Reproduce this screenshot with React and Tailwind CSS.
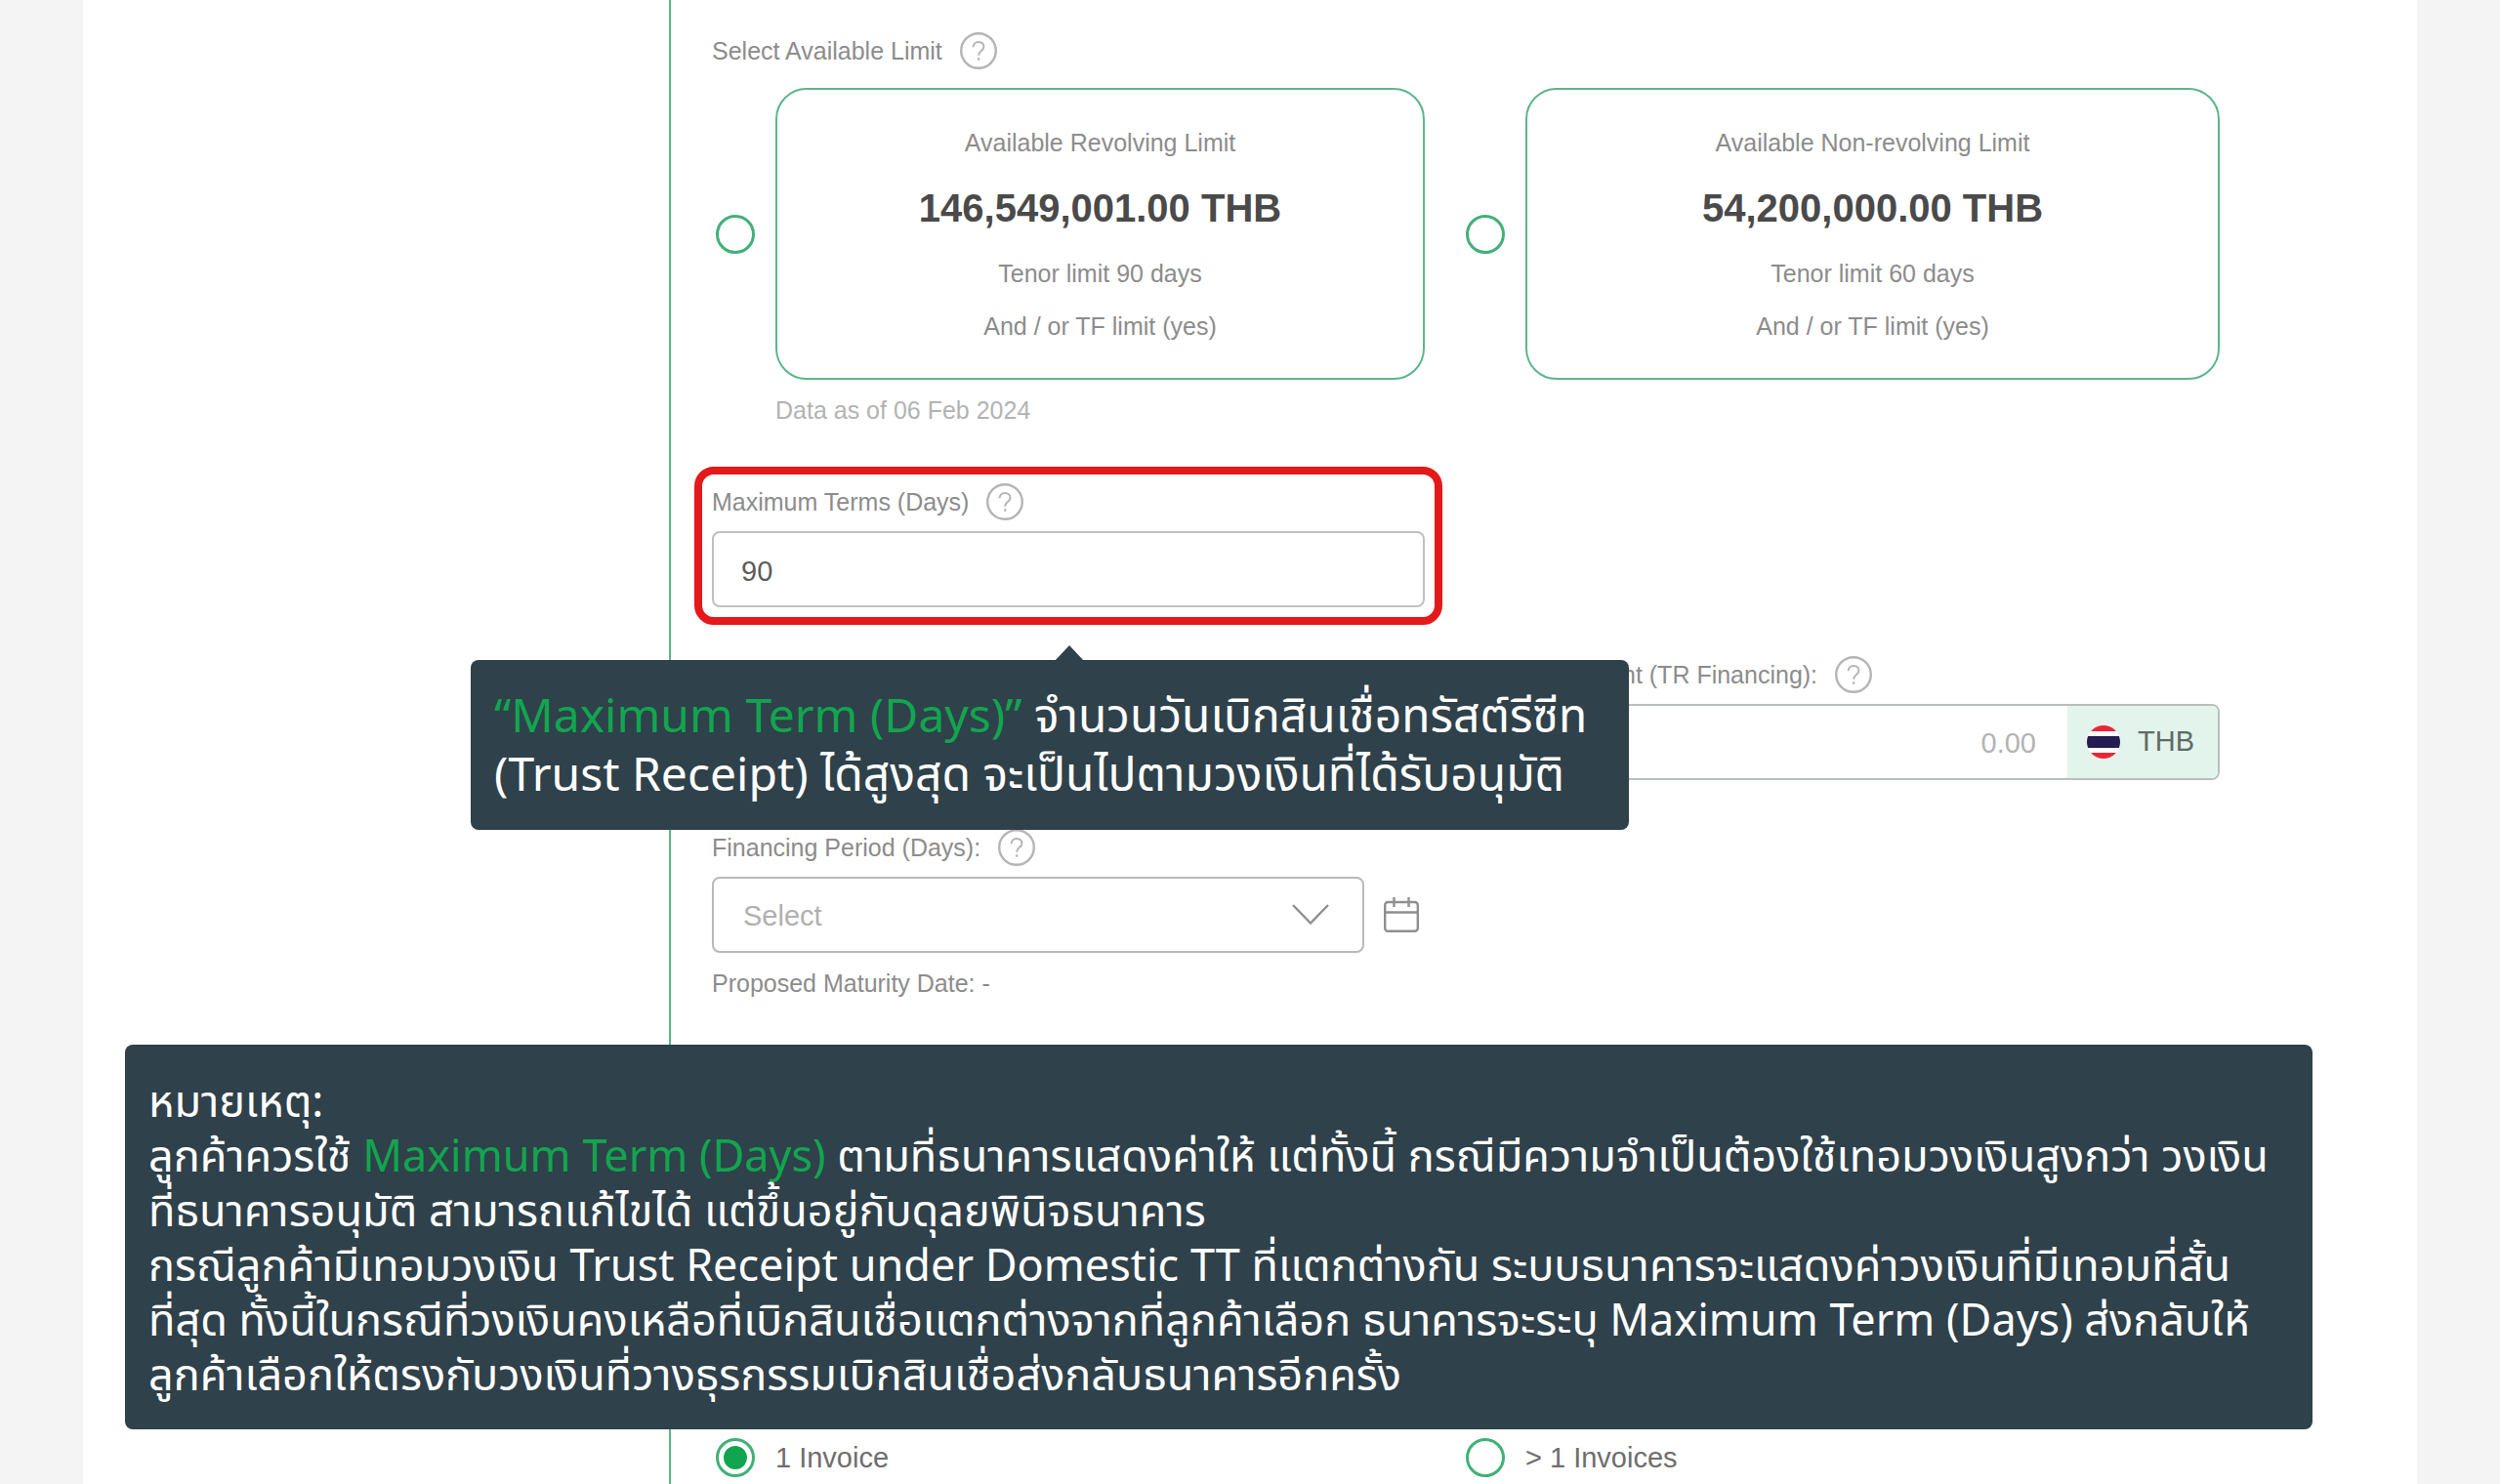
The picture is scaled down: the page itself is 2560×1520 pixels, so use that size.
import { useState } from 'react';

const HelpButton = ({ label }) => (
    <button type="button" aria-label={`Help: ${label}`} className="shrink-0">
        <svg width="38" height="38" viewBox="0 0 38 38" fill="none" stroke="#b5b5b5">
            <circle cx="19" cy="19" r="17.8" strokeWidth="2.4" />
            <path d="M13.6 15.2c0-3.2 2.3-5.2 5.5-5.2 3.1 0 5.3 1.9 5.3 4.7 0 2.3-1.3 3.4-2.8 4.6-1.6 1.3-2.4 2.2-2.4 4.5" strokeWidth="2" />
            <path d="M19.2 26.2v2.6" strokeWidth="2.2" />
        </svg>
    </button>
);

const FieldLabel = ({ htmlFor, children }) => (
    <div className="mb-[11px] flex items-center gap-[18px]">
        <label htmlFor={htmlFor} className="whitespace-nowrap text-[25px] leading-[30px]">{children}</label>
        <HelpButton label={children} />
    </div>
);

const Radio = ({ id, ...props }) => (
    <span className="relative ml-1 flex h-10 w-10 shrink-0">
        <input
            id={id}
            type="radio"
            className="peer h-10 w-10 appearance-none rounded-full border-[3px] border-[#43b077]"
            {...props}
        />
        <span className="pointer-events-none absolute inset-2 hidden rounded-full bg-[#12a54f] peer-checked:block" />
    </span>
);

const ThaiFlag = () => (
    <svg width="34" height="34" viewBox="0 0 34 34">
        <clipPath id="flag">
            <circle cx="17" cy="17" r="17" />
        </clipPath>
        <g clipPath="url(#flag)">
            <rect width="34" height="34" fill="#fff" />
            <rect width="34" height="6" fill="#ee2436" />
            <rect y="11" width="34" height="12" fill="#251d52" />
            <rect y="28" width="34" height="6" fill="#ee2436" />
        </g>
    </svg>
);

const CalendarIcon = () => (
    <svg width="36" height="36" viewBox="0 0 36 36" fill="none" stroke="#8f8f8f" strokeWidth="2.4">
        <rect x="1.2" y="5" width="33.6" height="29.8" rx="3" />
        <path d="M1 15.5h34M10.5 0v10M25.5 0v10" />
    </svg>
);

const limits = [
    { id: 'revolving', title: 'Available Revolving Limit', amount: '146,549,001.00 THB', tenor: 'Tenor limit 90 days' },
    { id: 'non-revolving', title: 'Available Non-revolving Limit', amount: '54,200,000.00 THB', tenor: 'Tenor limit 60 days' },
];

const LimitOption = ({ limit, checked, onChange }) => (
    <div className="flex items-center gap-[21px]">
        <Radio id={limit.id} name="limit" checked={checked} onChange={onChange} />
        <label
            htmlFor={limit.id}
            className="flex flex-1 flex-col items-center rounded-[32px] border-2 border-[#5cb68b] pt-[39px] pb-[38px] text-[25px] leading-[30px]"
        >
            <span>{limit.title}</span>
            <strong className="mt-7 text-[40px] leading-[48px] text-[#4a4a4a]">{limit.amount}</strong>
            <span className="mt-7">{limit.tenor}</span>
            <span className="mt-6">And / or TF limit (yes)</span>
        </label>
    </div>
);

const App = () => {
    const [limit, setLimit] = useState('');
    const [days, setDays] = useState('90');
    const [amount, setAmount] = useState('');
    const [invoices, setInvoices] = useState('one');

    return (
        <div className="min-h-screen overflow-hidden bg-[#f4f4f4] px-[85px] font-['Liberation_Sans',Arial,sans-serif] text-[#8c8c8c]">
            <main className="flex min-h-screen bg-white">
                <div className="w-[600px] shrink-0" />
                <form className="flex-1 border-l-2 border-[#5cb68b] pt-[33px] pr-[202px] pl-[42px]">
                    <div className="mb-[19px] flex items-center gap-[18px]">
                        <span className="text-[25px] leading-[30px]">Select Available Limit</span>
                        <HelpButton label="Select Available Limit" />
                    </div>

                    <div className="grid grid-cols-[730fr_776fr] gap-x-[38px]">
                        {limits.map((item) => (
                            <LimitOption
                                key={item.id}
                                limit={item}
                                checked={limit === item.id}
                                onChange={() => setLimit(item.id)}
                            />
                        ))}
                    </div>
                    <p className="mt-4 ml-[65px] text-[25px] leading-[30px] text-[#b3b3b3]">Data as of 06 Feb 2024</p>

                    <div className="mt-[60px] grid grid-cols-[730fr_776fr] gap-x-[38px] gap-y-[50px]">
                        {/* Maximum terms, highlighted with its callout */}
                        <div className="relative">
                            <FieldLabel htmlFor="terms">Maximum Terms (Days)</FieldLabel>
                            <input
                                id="terms"
                                value={days}
                                onChange={(e) => setDays(e.target.value)}
                                className="h-[78px] w-full rounded-lg border-2 border-[#c0c0c0] px-7 pt-1 text-[29px] text-[#5c5c5c]"
                            />
                            <div className="pointer-events-none absolute -inset-x-[18px] -top-[17px] -bottom-[18px] rounded-[20px] border-8 border-[#e3191b]" />
                            <div
                                role="tooltip"
                                className="absolute top-full -left-[247px] z-10 mt-[54px] h-[174px] w-[1186px] rounded-lg bg-[#2f414a] px-6 pt-[30px] font-['Noto_Sans_Thai','Open_Sans','Noto_Sans',sans-serif] text-[48px] leading-[60px] whitespace-nowrap text-white"
                            >
                                <svg className="absolute -top-[15px] left-[598px]" width="30" height="16" viewBox="0 0 30 16">
                                    <path d="M15 0L30 16H0z" fill="#2f414a" />
                                </svg>
                                <p>
                                    <span className="text-[#12a54f]">“Maximum Term (Days)”</span> จำนวนวันเบิกสินเชื่อทรัสต์รีซีท
                                </p>
                                <p>(Trust Receipt) ได้สูงสุด จะเป็นไปตามวงเงินที่ได้รับอนุมัติ</p>
                            </div>
                        </div>

                        <div className="col-start-2 row-start-2">
                            <FieldLabel htmlFor="amount">Request Amount (TR Financing):</FieldLabel>
                            <div className="flex h-[78px] overflow-hidden rounded-lg border-2 border-[#b9bfbc]">
                                <input
                                    id="amount"
                                    value={amount}
                                    onChange={(e) => setAmount(e.target.value)}
                                    placeholder="0.00"
                                    className="min-w-0 flex-1 px-8 pt-1 text-right text-[29px] text-[#5c5c5c] placeholder:text-[#b3b3b3]"
                                />
                                <div className="flex w-[154px] items-center gap-[18px] bg-[#e2f4eb] pl-5 text-[29px] text-[#5f6b66]">
                                    <ThaiFlag />
                                    <span>THB</span>
                                </div>
                            </div>
                        </div>

                        <div className="row-start-3">
                            <FieldLabel htmlFor="period">Financing Period (Days):</FieldLabel>
                            <div className="flex items-center gap-5">
                                <div className="relative flex-1">
                                    <select
                                        id="period"
                                        className="h-[78px] w-full appearance-none rounded-lg border-2 border-[#b9b9b9] px-[30px] pt-1 text-[29px] text-[#b0b0b0]"
                                    >
                                        <option>Select</option>
                                    </select>
                                    <svg className="pointer-events-none absolute top-7 right-9" width="38" height="22" viewBox="0 0 38 22" fill="none" stroke="#8f8f8f" strokeWidth="2.4">
                                        <path d="M1 1l18 18.5L37 1" />
                                    </svg>
                                </div>
                                <button type="button" aria-label="Open calendar" className="mr-[6px]">
                                    <CalendarIcon />
                                </button>
                            </div>
                        </div>
                    </div>
                    <p className="mt-4 text-[25px] leading-[30px]">Proposed Maturity Date: -</p>

                    {/* Note laid across the form */}
                    <aside className="relative z-10 mt-12 -mr-[95px] mb-[9px] -ml-[601px] rounded-lg bg-[#2f414a] px-6 pt-8 pb-[26px] font-['Noto_Sans_Thai','Open_Sans','Noto_Sans',sans-serif] text-[45px] leading-[56px] whitespace-nowrap text-white">
                        <p>หมายเหตุ:</p>
                        <p>
                            ลูกค้าควรใช้ <span className="text-[#12a54f]">Maximum Term (Days)</span> ตามที่ธนาคารแสดงค่าให้ แต่ทั้งนี้ กรณีมีความจำเป็นต้องใช้เทอมวงเงินสูงกว่า วงเงิน
                            <br />
                            ที่ธนาคารอนุมัติ สามารถแก้ไขได้ แต่ขึ้นอยู่กับดุลยพินิจธนาคาร
                        </p>
                        <p>
                            กรณีลูกค้ามีเทอมวงเงิน Trust Receipt under Domestic TT ที่แตกต่างกัน ระบบธนาคารจะแสดงค่าวงเงินที่มีเทอมที่สั้น
                            <br />
                            ที่สุด ทั้งนี้ในกรณีที่วงเงินคงเหลือที่เบิกสินเชื่อแตกต่างจากที่ลูกค้าเลือก ธนาคารจะระบุ Maximum Term (Days) ส่งกลับให้
                            <br />
                            ลูกค้าเลือกให้ตรงกับวงเงินที่วางธุรกรรมเบิกสินเชื่อส่งกลับธนาคารอีกครั้ง
                        </p>
                    </aside>

                    <div className="grid grid-cols-[730fr_776fr] gap-x-[38px] text-[29px] leading-10 text-[#6e6e6e]">
                        <div className="flex items-center gap-[21px]">
                            <Radio id="one" name="invoices" checked={invoices === 'one'} onChange={() => setInvoices('one')} />
                            <label htmlFor="one">1 Invoice</label>
                        </div>
                        <div className="flex items-center gap-[21px]">
                            <Radio id="many" name="invoices" checked={invoices === 'many'} onChange={() => setInvoices('many')} />
                            <label htmlFor="many">&gt; 1 Invoices</label>
                        </div>
                    </div>
                </form>
            </main>
        </div>
    );
};

export default App;
